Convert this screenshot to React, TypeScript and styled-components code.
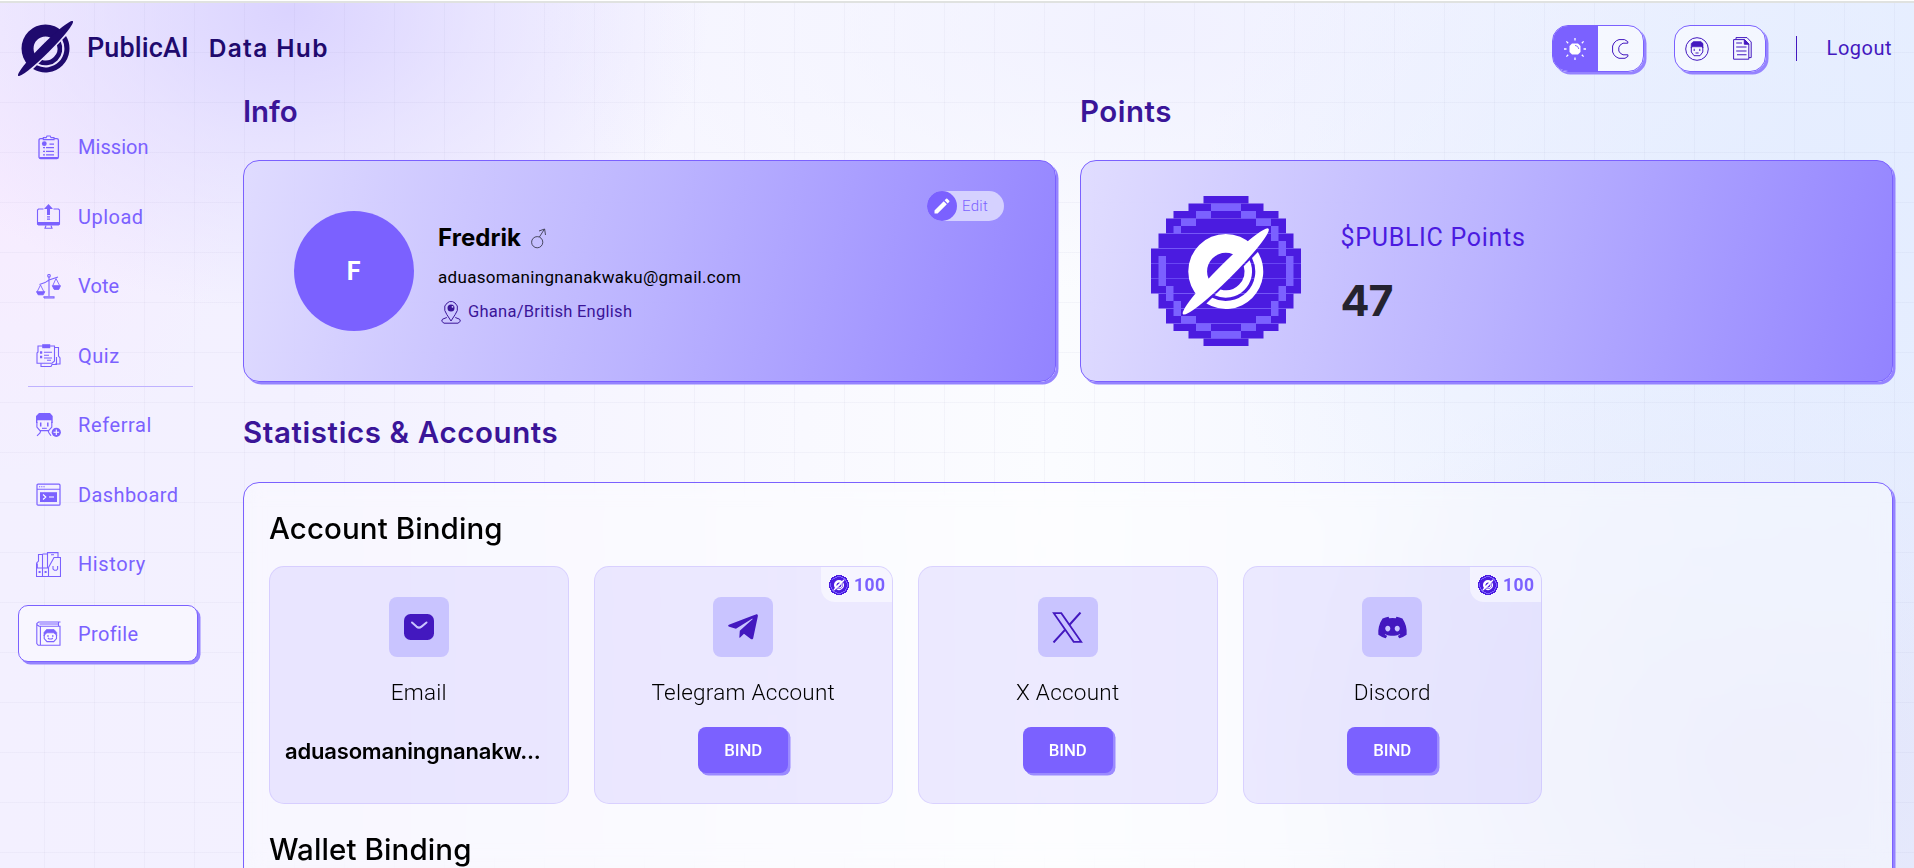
import React from 'react';
import styled, { createGlobalStyle } from 'styled-components';
import { FaTelegramPlane, FaDiscord } from 'react-icons/fa';
import { MdEdit } from 'react-icons/md';

const purple = '#7b61ff';
const deep = '#4318bf';
const heading = '#3a1598';
const bodyFont = 'Roboto, "Liberation Sans", sans-serif';
const displayFont = 'Inter, "Liberation Sans", sans-serif';

const Global = createGlobalStyle`
  *, *::before, *::after { box-sizing: border-box; }
  body { margin: 0; overflow: hidden; font-family: ${bodyFont}; color: #000; }
  svg { display: block; flex: none; }
`;

/* ---------- layout ---------- */

const Page = styled.div`
  height: 868px;
  overflow: hidden;
  border-top: 1px solid #fff;
  background:
    radial-gradient(ellipse 420px 300px at 290px 10px, rgba(216, 208, 255, 0.9), rgba(220, 213, 255, 0.5) 45%, rgba(226, 220, 255, 0) 100%),
    radial-gradient(ellipse 240px 300px at 0px 180px, rgba(248, 235, 255, 0.8), rgba(248, 235, 255, 0) 100%),
    radial-gradient(ellipse 620px 520px at 1820px 230px, rgba(227, 236, 255, 0.9), rgba(227, 236, 255, 0) 100%),
    radial-gradient(ellipse 520px 420px at 1780px 760px, rgba(226, 228, 250, 0.95), rgba(226, 228, 250, 0) 100%),
    radial-gradient(ellipse 620px 260px at 1150px 30px, rgba(240, 240, 255, 0.9), rgba(240, 240, 255, 0) 100%),
    linear-gradient(90deg, #f3f0ff 0%, #f3f1ff 16%, #f9f9ff 42%, #fbfcff 55%, #f1f4ff 82%, #eaf0ff 100%);
`;

const GridLayer = styled.div`
  height: 867px;
  border-top: 2px solid #e0e2e0;
  background-image:
    linear-gradient(90deg, rgba(110, 110, 160, 0.05) 1px, transparent 1px),
    linear-gradient(180deg, rgba(110, 110, 160, 0.05) 1px, transparent 1px);
  background-size: 50px 50px;
  background-position: 44px 49px;
`;

const Header = styled.header`
  height: 91px;
  display: flex;
  align-items: center;
  padding: 0 22px 0 18px;
`;

const Body = styled.div`
  display: grid;
  grid-template-columns: 243px 1fr;
`;

const Content = styled.main`
  padding-right: 21px;
`;

/* ---------- text ---------- */

const Text = styled.span<{
  $size: number; $line?: number; $weight?: number; $color?: string; $track?: number; $display?: boolean;
}>`
  display: block;
  white-space: nowrap;
  font-family: ${(p) => (p.$display ? displayFont : bodyFont)};
  font-size: ${(p) => p.$size}px;
  line-height: ${(p) => p.$line ?? 24}px;
  font-weight: ${(p) => p.$weight ?? 400};
  letter-spacing: ${(p) => p.$track ?? 0}px;
  color: ${(p) => p.$color ?? '#000'};
`;

const SectionTitle = styled.h2<{ $track?: number }>`
  margin: 0;
  font: 600 29.5px/34px ${displayFont};
  letter-spacing: ${(p) => p.$track ?? 0.5}px;
  color: ${heading};
`;

const PanelTitle = styled.h3`
  margin: 0;
  font: 500 29.5px/34px ${displayFont};
  letter-spacing: 0.1px;
  color: #000;
`;

/* ---------- header parts ---------- */

const Brand = styled.div`
  display: flex;
  align-items: center;
  flex: 1;
  padding-bottom: 1px;
`;

const BrandName = styled(Text)`
  margin: 0 0 1px 14px;
`;

const BrandSuffix = styled(Text)`
  margin: 0 0 1px 20px;
`;

const Segmented = styled.div`
  display: flex;
  width: 92px;
  height: 47px;
  border: 1px solid ${purple};
  border-radius: 16px;
  overflow: hidden;
  background: rgba(255, 255, 255, 0.5);
  box-shadow: 2.5px 2.5px 0 #9583ff;
  margin-right: 30px;
`;

const Segment = styled.button<{ $active?: boolean }>`
  width: 45px;
  display: flex;
  align-items: center;
  justify-content: center;
  border: 0;
  padding: 0;
  background: ${(p) => (p.$active ? purple : 'transparent')};
`;

const HeaderRule = styled.div`
  width: 1px;
  height: 25px;
  background: ${deep};
  margin-right: 30px;
`;

const LogoutLink = styled(Text)`
  margin-bottom: 1px;
`;

/* ---------- sidebar ---------- */

const Sidebar = styled.nav`
  padding: 24.5px 0 0 18px;
`;

const NavGroup = styled.ul`
  list-style: none;
  margin: 0;
  padding: 0;
  display: flex;
  flex-direction: column;
  gap: 12.5px;
`;

const NavItem = styled.li<{ $active?: boolean }>`
  width: 180px;
  height: 57px;
  display: flex;
  align-items: center;
  gap: 17px;
  padding-left: 17px;
  border: 1px solid ${(p) => (p.$active ? purple : 'transparent')};
  border-radius: 10px;
  background: ${(p) => (p.$active ? '#f8f6ff' : 'transparent')};
  box-shadow: ${(p) => (p.$active ? '2.5px 2.5px 0 #9583ff' : 'none')};
`;

const NavDivider = styled.div`
  width: 165px;
  height: 1px;
  margin: 2px 0 9.5px 10px;
  background: #bfb2ff;
`;

/* ---------- top cards ---------- */

const TopGrid = styled.div`
  display: grid;
  grid-template-columns: 1fr 1fr;
  column-gap: 24px;
  row-gap: 32px;
  margin-bottom: 33px;
`;

const GradientCard = styled.section`
  display: flex;
  height: 222px;
  border: 1px solid ${purple};
  border-radius: 16px;
  box-shadow: 2.5px 2.5px 0 #9583ff;
  background: linear-gradient(103deg, rgba(223, 219, 255, 0.93) 0%, rgba(184, 176, 255, 0.95) 50%, rgba(145, 129, 255, 0.98) 100%);
`;

const Avatar = styled.div`
  width: 120px;
  height: 120px;
  margin: 50px 24px 0 50px;
  border-radius: 50%;
  background: ${purple};
  display: flex;
  align-items: center;
  justify-content: center;
  padding: 2px 1px 0 0;
`;

const Identity = styled.div`
  flex: 1;
  padding-top: 64px;
`;

const NameRow = styled.div`
  display: flex;
  align-items: center;
  gap: 10px;
  height: 26px;
`;

const EmailLine = styled(Text)`
  margin-top: 14px;
`;

const PlaceRow = styled.div`
  display: flex;
  align-items: center;
  gap: 7px;
  margin: 11px 0 0 3px;
`;

const EditPill = styled.button`
  display: flex;
  align-items: center;
  gap: 5px;
  width: 77px;
  height: 30px;
  margin: 30px 51px 0 0;
  padding: 0;
  border: 0;
  border-radius: 15px;
  background: #d5d1ff;
`;

const EditDot = styled.span`
  display: flex;
  align-items: center;
  justify-content: center;
  width: 30px;
  height: 30px;
  border-radius: 50%;
  background: ${purple};
  color: #fff;
`;

const CoinWrap = styled.div`
  padding: 35px 39.5px 0 70px;
`;

const PointsText = styled.div`
  padding-top: 63px;
  display: flex;
  flex-direction: column;
  gap: 23px;
`;

/* ---------- binding panel ---------- */

const Panel = styled.section`
  height: 460px;
  margin-top: 33px;
  padding: 28px 25px;
  border: 1px solid ${purple};
  border-radius: 16px;
  box-shadow: 2.5px 2.5px 0 #9583ff;
  background: rgba(255, 255, 255, 0.42);
  backdrop-filter: blur(10px);
`;

const BindingRow = styled.div`
  display: grid;
  grid-template-columns: repeat(4, 299.5px);
  gap: 25px;
  margin: 21px 0 28px;
`;

const BindingCard = styled.article`
  position: relative;
  display: flex;
  flex-direction: column;
  align-items: center;
  height: 238px;
  padding: 30px 15px 0;
  border: 1px solid rgba(123, 97, 255, 0.17);
  border-radius: 15px;
  overflow: hidden;
  background: rgba(123, 97, 255, 0.12);
`;

const IconTile = styled.div`
  display: flex;
  align-items: center;
  justify-content: center;
  width: 60px;
  height: 60px;
  margin-bottom: 23px;
  border-radius: 8px;
  background: #c9c4ff;
  color: ${deep};
`;

const BoundValue = styled(Text)`
  align-self: flex-start;
  margin-top: 35px;
`;

const BindButton = styled.button`
  width: 90px;
  height: 46px;
  margin-top: 23px;
  padding: 0;
  border: 0;
  border-radius: 8px;
  background: ${purple};
  box-shadow: 2.5px 2.5px 0 #9b8aff;
  color: #fff;
  font: 500 16.8px/46px ${bodyFont};
  letter-spacing: -0.1px;
`;

const RewardBadge = styled.div`
  position: absolute;
  top: 0;
  right: 0;
  display: flex;
  align-items: center;
  gap: 5px;
  width: 71px;
  height: 35px;
  padding-left: 8px;
  border-bottom-left-radius: 14px;
  background: rgba(255, 255, 255, 0.5);
`;

/* ---------- drawings ---------- */

const OrbitMark = () => (
  <g transform="rotate(-45)">
    <path d="M-37.5,0 A37.5,37.5 0 0 1 37.5,0 L18.7,0 A18.7,18.7 0 0 0 -18.7,0Z" />
    <path d="M36.4,9 A37.5,37.5 0 0 1 -36.4,9 L-28.1,9 A29.5,29.5 0 0 0 28.1,9Z" />
    <path d="M24.7,9 A26.3,26.3 0 0 1 -24.7,9 L-16.4,9 A18.7,18.7 0 0 0 16.4,9Z" />
    <ellipse rx="60.5" ry="7.4" />
  </g>
);

const Logo = () => (
  <svg width="55" height="55" viewBox="-43 -43 86 86" fill="#1f0a6e"><OrbitMark /></svg>
);

// [row, rowSpan, fromColumn, toColumn] on a 20 x 20 pixel grid
const coinBase = [
  [0, 1, 7, 13], [1, 1, 5, 15], [2, 1, 3, 17], [3, 2, 2, 18], [5, 2, 1, 19], [7, 6, 0, 20],
  [13, 2, 1, 19], [15, 2, 2, 18], [17, 1, 3, 17], [18, 1, 5, 15], [19, 1, 7, 13],
];
const coinShine = [
  [1, 1, 8, 12], [2, 1, 6, 8], [2, 1, 12, 14], [3, 1, 4, 6], [3, 1, 14, 16], [4, 1, 3, 4], [4, 2, 16, 17],
  [6, 2, 17, 18], [8, 4, 1, 2], [8, 4, 18, 19], [12, 2, 2, 3], [12, 2, 17, 18], [14, 2, 3, 4], [14, 2, 16, 17],
  [16, 1, 4, 6], [16, 1, 14, 16], [17, 1, 6, 8], [17, 1, 12, 14], [18, 1, 8, 12],
];
const coinSeams = [[5, 2, 18], [7, 1, 19], [9, 0, 20], [11, 0, 20], [13, 1, 19], [15, 2, 18], [17, 3, 17]];

const Coin = ({ size }: { size: number }) => (
  <svg width={size} height={size} viewBox="0 0 20 20">
    <g fill="#4b1be0">
      {coinBase.map(([r, h, a, b]) => <rect key={r} x={a} y={r} width={b - a} height={h} />)}
    </g>
    <g fill={purple}>
      {coinShine.map(([r, h, a, b]) => <rect key={`${r}-${a}`} x={a} y={r} width={b - a} height={h} />)}
    </g>
    {size > 40 && (
      <g fill={purple} opacity="0.7">
        {coinSeams.map(([r, a, b]) => <rect key={r} x={a} y={r - 0.06} width={b - a} height="0.12" />)}
      </g>
    )}
    <g transform="translate(9.97 10.06) scale(0.1333)" fill="#fff"><OrbitMark /></g>
  </svg>
);

const Glyph = ({ children, color = purple, size = 25 }: { children: React.ReactNode; color?: string; size?: number }) => (
  <svg width={size} height={size} viewBox="0 0 25 25" fill="none" stroke={color} strokeWidth="1.1" color={color}>
    {children}
  </svg>
);

const MissionIcon = () => (
  <Glyph>
    <rect x="3" y="3.6" width="19.4" height="20" rx="1.6" strokeWidth="1.3" />
    <path d="M3.5 22.9H22" strokeWidth="1.8" />
    <path d="M7.3 4.6V2.6H10.2L11 1H14.2L15 2.6H18V4.6Z" fill="#eeeaff" />
    <circle cx="8.3" cy="8.7" r="2.4" fill="currentColor" stroke="none" />
    <path d="M13.5 9.2H18M7 12.6H9M10 12.6H18M7 16.3H9M10 16.3H18M7 19.8H9M10 19.8H18" strokeWidth="1.2" />
  </Glyph>
);
const UploadIcon = () => (
  <Glyph>
    <path d="M12.5 0L17 5H14V11H11V5H8Z" fill="currentColor" stroke="none" />
    <path d="M11 12.9H14M11 15.2H14" strokeWidth="1.2" />
    <path d="M7.5 5H2.5L1.5 6V20L2.5 21H22.5L23.5 20V6L22.5 5H17.5" />
    <rect x="1.5" y="18" width="22" height="3" fill="currentColor" stroke="none" />
    <path d="M10 21.5L9 24.2H16L15 21.5" />
  </Glyph>
);
const VoteIcon = () => (
  <Glyph>
    <circle cx="13" cy="1.8" r="1.3" />
    <path d="M13 3V22M8 24V22.8H18V24H8M3.5 10.5L9 8.6L13 6L22 3" />
    <path d="M4.5 11L1 18M4.5 11L8 18M20 4.5L16.8 11.5M20 4.5L23.6 11.5" strokeWidth="0.9" />
    <path d="M0.5 17.7H8.8L7.2 20.8H2.2Z M16.3 11.7H24.5L22.8 15.4H18.2Z" fill="currentColor" strokeWidth="0.9" />
  </Glyph>
);
const QuizIcon = () => (
  <Glyph>
    <path d="M2 3H18.5V18L16 20.2H1V10L2 9Z" />
    <rect x="6.2" y="1.2" width="8" height="4" fill="currentColor" stroke="none" />
    <path d="M18.5 4.5H22.5V13L24 15V21H19M5 20.5V23.5H15L16 21.5H20.5V14" />
    <path d="M8 9.3H16M8 12.2H13M8 15H16M11 17.3H15" />
    <path d="M4 9.5H6.2M4 14H6.2" strokeWidth="2.4" />
  </Glyph>
);
const ReferralIcon = () => (
  <Glyph>
    <path d="M0 10V3L3 0H14L16.7 3V10H15.3V7.2H1.4V10Z" fill="currentColor" stroke="none" />
    <path d="M.9 9V14L4 17.6H12.6L15.8 14V9M4.6 18L4 20L1 22.8M12.2 18L13 20L15 22.8" />
    <path d="M4.7 9.5V13.5M11.8 9.5V13.5" strokeWidth="1.5" />
    <path d="M6 15.3H10.8" />
    <circle cx="20.3" cy="19.3" r="4.6" fill="currentColor" stroke="none" />
    <path d="M20.3 16.5V22.1M17.5 19.3H23.1" stroke="#fff" />
  </Glyph>
);
const DashboardIcon = () => (
  <Glyph>
    <rect x="1" y="2.2" width="23" height="21" rx="1" strokeWidth="1.2" />
    <path d="M1 7.3H24M3 4.8H4.2M5.2 4.8H6.4M7.4 4.8H8.6" />
    <rect x="4" y="10.2" width="17" height="9.8" fill="currentColor" stroke="none" />
    <path d="M7 12.5L9.8 15L7 17.5M13 15H18" stroke="#fff" />
  </Glyph>
);
const HistoryIcon = () => (
  <Glyph>
    <path d="M.5 24.5V16H6.5V24.5ZM6.5 24.5V16H12.5V24.5ZM12.5 24.5H24.5V5.5H18L12.5 15.5" />
    <path d="M.7 16V11L2.5 9V2.5H6.5V16M6.5 2H11.5V16M11.5 12V.6H22V5.5" />
    <path d="M2.6 20H4.6M8.6 20H10.6" strokeWidth="2.2" />
    <path d="M17 14V17L18.4 18.3H20.4L21.6 17V14M15 2.8H18" />
    <path d="M.9 11.5V16" strokeWidth="1.8" />
  </Glyph>
);
const ProfileIcon = () => (
  <Glyph>
    <path d="M24.5 1H2.6L.8 2.6V22.6L2.2 24.3H24V5.2H22.5V1M24 5.2H3L.8 3.5M4.4 5.2V24.3M3.5 3H22.5" />
    <path d="M8 15V11.5L10.5 8.5H18L20.7 11.5V15L19.6 13.2L17.5 11.8H11L9.2 13.2Z" fill="currentColor" strokeWidth="0.7" />
    <path d="M8.2 14V17.5L11 20.6H17.7L20.5 17.5V14" />
    <path d="M12 14V16M16.8 14V16M12 17L13 18H15.8L16.8 17" />
  </Glyph>
);

const SunIcon = () => (
  <svg width="24" height="24" viewBox="-12 -12 24 24" stroke="#fff" strokeWidth="1.3">
    <path d="M-3 -5.5H3L5.5 -3V3L3 5.5H-3L-5.5 3V-3Z" fill="#fff" stroke="none" />
    <path d="M0 -3.6Q3.4 -3.4 3.8 0" fill="none" stroke={purple} strokeWidth="0.9" />
    <path d="M0 -11V-8.5M0 8.5V11M-11 0H-8.5M8.5 0H11M-8.6 -7.6L-6.8 -5.8M8.6 -7.6L6.8 -5.8M-8.6 7.6L-6.8 5.8M8.6 7.6L6.8 5.8" />
  </svg>
);
const MoonIcon = () => (
  <svg width="17" height="20" viewBox="0 0 17 20" fill="none" stroke={deep} strokeWidth="1">
    <path d="M7 .6H12.5L15.8 2.6V4.2H11L8 6.2L6.8 8.5V12L8.4 14.3L11 15.8H15.9V17.4L13 19.3H7L4.2 18L2 15.8L.6 13V7L2 4L4.3 1.8Z" />
  </svg>
);
const FaceIcon = () => (
  <svg width="24" height="24" viewBox="0 0 24 24" fill="none" stroke={deep}>
    <circle cx="12" cy="12" r="11.3" strokeWidth="1" />
    <path d="M6.2 11V6.5L8.5 4.6H15.8L18 6.5V11L16.5 9.8H7.6Z" fill={deep} strokeWidth="0.6" />
    <path d="M6.3 10V15L9 18.7H15L17.8 15V10" strokeWidth="1" />
    <path d="M9.2 11.8V14M14.8 11.8V14M10.5 16H13.6" strokeWidth="1" />
  </svg>
);
const DocIcon = () => (
  <svg width="19" height="23" viewBox="0 0 19 23" fill="none" stroke={deep}>
    <path d="M.6 2.6H11.5L15.8 7V22.2H.6ZM3 2.4V.6H14L18.2 5V20.6H16" />
    <path d="M11.3 2.6V7.2H15.8Z" fill={deep} />
    <path d="M3.2 6H9M3.2 10H13.5M3.2 14H13.5M4 17.8H13.5" strokeWidth="1.1" />
  </svg>
);
const MaleIcon = () => (
  <svg width="16" height="21" viewBox="0 0 16 21" fill="none" stroke="#3b3b50" strokeWidth="0.9">
    <circle cx="6.2" cy="14.2" r="5.6" />
    <path d="M8.4 9L13.4 1.2M8 3L13.6 1L14.5 7" />
  </svg>
);
const PinIcon = () => (
  <svg width="20" height="23" viewBox="0 0 20 23" fill="none" stroke={heading}>
    <path d="M10 20L5.8 13.5L3.8 9.5V5L6.2 2L8.5 .6H11.6L14 2L16.3 5V9.5L14.2 13.5Z" />
    <path d="M5.8 16.5L1.5 18.2L.7 20.2L3 22.2H17L19.4 20.2L18.6 18.2L14.3 16.5" />
    <circle cx="10" cy="7" r="3.5" fill={heading} stroke="none" />
    <circle cx="11.5" cy="5.8" r="0.9" fill="#d8d4ff" stroke="none" />
  </svg>
);
const MailIcon = () => (
  <svg width="30" height="26" viewBox="0 0 30 26" fill="none">
    <rect width="30" height="26" rx="6.5" fill={deep} />
    <path d="M8 8.5L12.5 12.6Q15 14.6 17.5 12.6L22.5 8.5" stroke="#c9c4ff" strokeWidth="2" strokeLinecap="round" />
  </svg>
);
const XMark = () => (
  <svg width="31" height="31" viewBox="0 0 31 31" fill="none" stroke={deep} strokeWidth="1.8">
    <path d="M1.8 1.2H9.3L29.2 29.8H21.7Z" />
    <path d="M28.5 .5L17.3 13M13.2 17.6L1.5 30.5" strokeWidth="2" />
  </svg>
);

/* ---------- data ---------- */

const primaryNav = [
  { label: 'Mission', Icon: MissionIcon, track: 0.05 },
  { label: 'Upload', Icon: UploadIcon, track: 0.5 },
  { label: 'Vote', Icon: VoteIcon, track: 0.1 },
  { label: 'Quiz', Icon: QuizIcon, track: 0.5 },
];
const secondaryNav = [
  { label: 'Referral', Icon: ReferralIcon, track: 0.6 },
  { label: 'Dashboard', Icon: DashboardIcon, track: 0.4 },
  { label: 'History', Icon: HistoryIcon, track: 0.6 },
  { label: 'Profile', Icon: ProfileIcon, track: 0.35, active: true },
];
const accounts = [
  { label: 'Email', icon: <MailIcon />, value: 'aduasomaningnanakw...' },
  { label: 'Telegram Account', icon: <FaTelegramPlane size={34} />, reward: 100 },
  { label: 'X Account', icon: <XMark /> },
  { label: 'Discord', icon: <FaDiscord size={31} />, reward: 100 },
];

const renderNav = (items: { label: string; Icon: React.FC; track: number; active?: boolean }[]) => (
  <NavGroup>
    {items.map(({ label, Icon, track, active }) => (
      <NavItem key={label} $active={active}>
        <Icon />
        <Text $size={20} $line={26} $color={purple} $track={track}>{label}</Text>
      </NavItem>
    ))}
  </NavGroup>
);

export default function App() {
  return (
    <Page>
      <Global />
      <GridLayer>
        <Header>
          <Brand>
            <Logo />
            <BrandName $size={27} $weight={500} $track={0.1} $color="#1f0a6e">PublicAI</BrandName>
            <BrandSuffix $size={24.5} $weight={600} $track={1.35} $display $color="#1f0a6e">Data Hub</BrandSuffix>
          </Brand>
          <Segmented>
            <Segment $active><SunIcon /></Segment>
            <Segment><MoonIcon /></Segment>
          </Segmented>
          <Segmented>
            <Segment><FaceIcon /></Segment>
            <Segment><DocIcon /></Segment>
          </Segmented>
          <HeaderRule />
          <LogoutLink $size={20} $track={0.5} $color={deep}>Logout</LogoutLink>
        </Header>
        <Body>
          <Sidebar>
            {renderNav(primaryNav)}
            <NavDivider />
            {renderNav(secondaryNav)}
          </Sidebar>
          <Content>
            <TopGrid>
              <SectionTitle $track={-0.1}>Info</SectionTitle>
              <SectionTitle>Points</SectionTitle>
              <GradientCard>
                <Avatar><Text $size={25} $weight={700} $color="#fff">F</Text></Avatar>
                <Identity>
                  <NameRow>
                    <Text $size={24} $weight={700} $display $track={0.07}>Fredrik</Text>
                    <MaleIcon />
                  </NameRow>
                  <EmailLine $size={17} $track={0.31}>aduasomaningnanakwaku@gmail.com</EmailLine>
                  <PlaceRow>
                    <PinIcon />
                    <Text $size={16.5} $track={0.27} $color={heading}>Ghana/British English</Text>
                  </PlaceRow>
                </Identity>
                <EditPill>
                  <EditDot><MdEdit size={20} /></EditDot>
                  <Text $size={15} $weight={300} $track={0.3} $color={purple}>Edit</Text>
                </EditPill>
              </GradientCard>
              <GradientCard>
                <CoinWrap><Coin size={150} /></CoinWrap>
                <PointsText>
                  <Text $size={25} $line={28} $track={0.7} $color="#4b1be0">$PUBLIC Points</Text>
                  <Text $size={43} $line={50} $weight={700} $track={-1} $display $color="#25232f">47</Text>
                </PointsText>
              </GradientCard>
            </TopGrid>
            <SectionTitle $track={0.6}>Statistics &amp; Accounts</SectionTitle>
            <Panel>
              <PanelTitle>Account Binding</PanelTitle>
              <BindingRow>
                {accounts.map(({ label, icon, value, reward }) => (
                  <BindingCard key={label}>
                    {reward && (
                      <RewardBadge>
                        <Coin size={20} />
                        <Text $size={17.5} $weight={700} $track={0.4} $color={purple}>{reward}</Text>
                      </RewardBadge>
                    )}
                    <IconTile>{icon}</IconTile>
                    <Text $size={22.5} $weight={300} $track={0.25}>{label}</Text>
                    {value ? (
                      <BoundValue $size={22} $weight={600} $display $track={-0.18}>{value}</BoundValue>
                    ) : (
                      <BindButton>BIND</BindButton>
                    )}
                  </BindingCard>
                ))}
              </BindingRow>
              <PanelTitle>Wallet Binding</PanelTitle>
            </Panel>
          </Content>
        </Body>
      </GridLayer>
    </Page>
  );
}
